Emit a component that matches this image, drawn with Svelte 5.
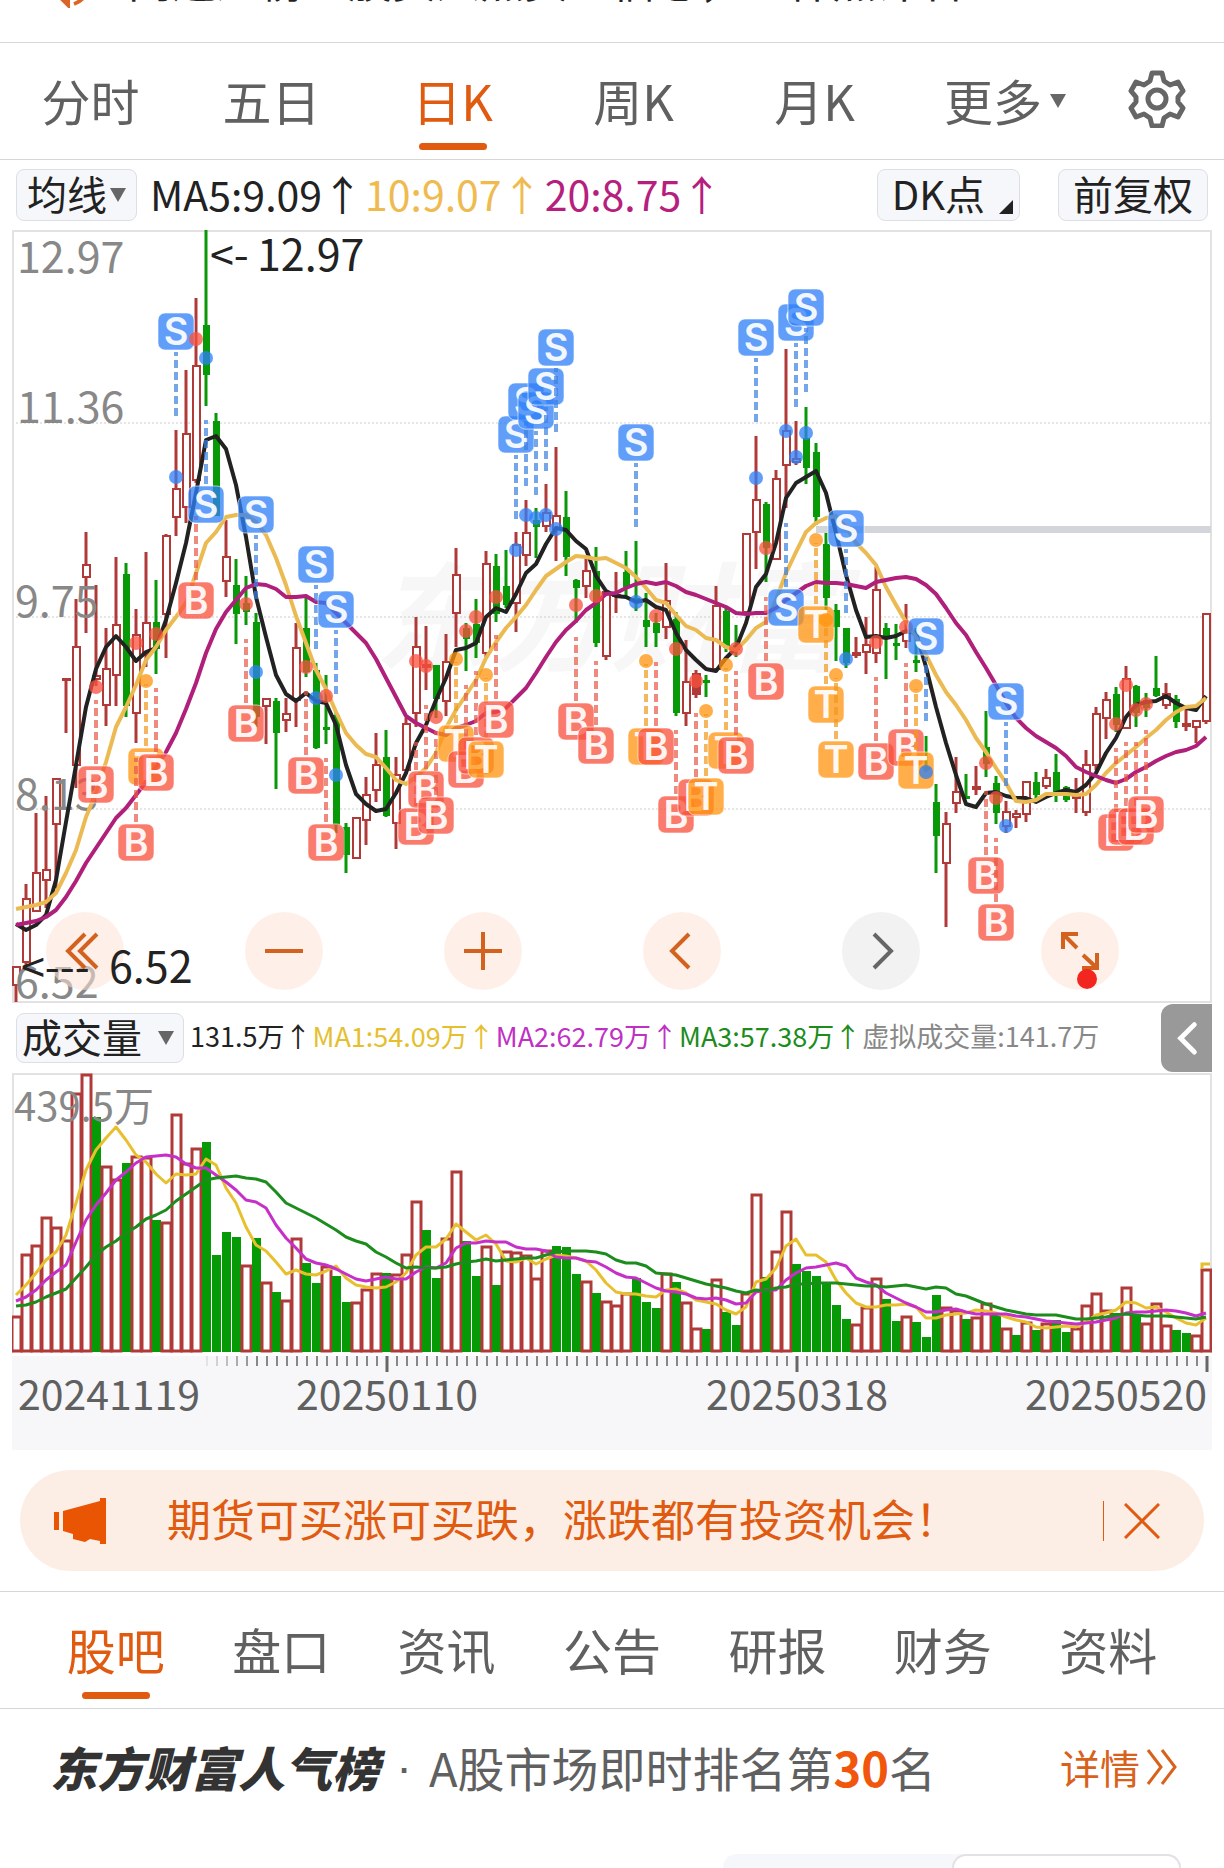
<script>
  // x position of the i-th trading day
  const X = (i) => 16 + 10 * i;

  // [colour, high, body top, body bottom, low] ; colour: r hollow, f filled red, g green
  const candles = `r 966 966 986 1002|r 884 898 963 966|r 813 872 912 912|r 796 869 881 908|r 778 778 825 888|f 678 678 679 733|r 599 646 766 788|r 532 564 578 633|r 585 675 680 686|r 628 668 706 726
r 557 624 676 706|g 563 574 706 717|r 609 634 714 743|r 552 622 655 667|g 580 622 649 674|r 534 535 615 658|r 430 488 518 536|r 370 433 508 523|r 298 365 481 483|g 230 325 375 406
g 413 421 516 516|r 520 556 582 597|g 559 585 614 644|g 576 603 612 625|g 613 622 717 727|r 698 698 707 744|g 698 701 733 789|r 698 713 721 732|r 623 647 701 727|g 595 628 672 677
g 663 670 748 749|g 675 727 729 744|g 712 715 825 833|g 823 827 855 873|r 817 817 859 859|r 777 794 821 845|r 733 764 791 802|g 730 757 816 817|r 757 774 824 849|r 718 723 771 771
r 617 646 714 727|f 626 664 668 690|g 665 665 699 718|r 634 661 702 716|r 548 574 614 647|g 623 628 639 671|g 599 624 643 658|r 551 563 654 657|g 554 566 614 622|g 550 586 605 608
r 532 544 604 632|r 500 532 556 566|g 508 520 527 558|r 484 512 527 532|r 447 515 530 561|g 491 517 557 576|g 579 580 588 623|r 558 570 587 598|g 547 571 643 647|r 590 591 657 660
f 572 594 596 613|g 551 572 587 597|g 541 598 602 611|g 593 620 627 647|g 613 623 633 647|r 563 600 628 639|g 612 619 713 716|r 640 681 714 726|f 670 673 695 698|g 675 680 681 697
r 586 605 670 670|g 608 611 648 652|g 625 645 650 657|r 533 533 613 613|r 436 499 533 569|g 502 504 548 582|r 470 478 560 560|r 349 430 466 508|r 421 458 463 465|g 407 438 468 484
g 443 452 517 525|g 533 544 598 610|g 604 610 627 661|g 628 628 663 668|f 637 652 656 658|r 617 644 653 674|r 567 589 654 663|g 623 628 637 679|g 624 643 646 660|r 604 630 642 648
g 628 660 661 672|g 736 767 768 772|g 784 802 836 873|r 812 823 864 927|r 757 791 804 813|g 774 796 797 798|f 766 786 790 795|g 711 747 764 777|g 776 783 813 824|r 801 811 827 833
r 810 813 818 828|r 781 781 815 822|g 772 782 795 803|r 769 777 787 789|g 754 772 795 802|g 786 787 800 802|f 778 796 798 813|r 750 764 813 816|r 707 713 766 770|r 692 699 719 739
g 687 694 725 732|r 666 678 729 729|g 685 686 713 727|g 693 700 708 717|g 656 688 696 697|r 683 693 706 709|g 695 699 722 728|f 708 723 727 731|r 720 720 728 743|r 613 613 722 724`
    .split(/[|\n]/)
    .map((s) => {
      const [c, h, t, b, l] = s.trim().split(' ');
      return { c, h: +h, t: +t, b: Math.max(+b, +t + 2), l: +l };
    });

  const nums = (s) => s.trim().split(/\s+/).map(Number);
  const line = (s) => nums(s).map((y, i) => `${X(i)},${y}`).join(' ');

  const ma5 = line(`924 930 925 915 880 822 765 707 669 647 636 647 661 652 648 620 583 543 493 440 436 449 485 537 597 637 675 694 701 693
701 703 725 765 794 804 811 809 793 773 743 725 700 678 650 648 643 617 608 612 594 573 564 544 528 530 541 549 576 591 596 597 602 600 607 610 633 650 660 669
671 658 648 623 587 574 543 498 483 477 471 493 533 575 610 637 636 638 636 631 633 667 707 743 775 804 807 793 792 796 798 798 802 797 793 790 792 785 773 753 738 717 705 702 701 696 703 708 710 696`);
  const ma10 = line(`909 907 905 902 893 873 850 817 793 762 727 707 685 660 647 630 617 603 573 543 532 517 515 515 522 535 558 585 616 643
670 689 712 733 745 754 757 768 780 784 777 768 753 728 710 695 680 658 642 628 617 605 590 576 569 562 556 557 559 558 563 568 577 588 600 603 615 626 630 638
640 647 650 640 628 622 600 573 552 532 523 518 516 527 543 553 565 587 605 622 637 655 675 692 705 720 738 752 768 783 801 802 800 794 794 794 795 794 785 773 763 755 747 738 730 720 712 707 706 698`);
  const ma20 = line(`925 923 921 917 910 897 881 863 848 833 818 808 795 782 767 752 733 709 683 653 629 612 600 588 584 585 589 597 597 596
602 603 613 623 633 643 659 678 697 716 723 728 733 735 728 725 721 713 712 708 698 688 673 657 642 630 621 610 603 594 593 588 584 582 584 582 586 592 595 599
603 607 613 614 613 613 608 600 593 586 582 583 583 584 586 588 582 580 578 577 579 585 594 608 623 635 652 668 685 703 718 728 736 742 748 756 767 772 776 780 783 779 772 767 761 756 752 750 746 737`);

  // [kind, day, badge centre, dot centre]
  const signals = `S 16 331 477|T 13 766 681|B 8 784 687|B 14 772 634|B 12 842 643|B 18 600 339|S 19 504 358|B 23 723 604|S 24 514 672|B 29 775 667|S 30 564 698|B 31 842 696|S 32 609 775
B 40 826 661|B 41 789 666|B 42 815 717|T 44 743 659|B 45 769 631|B 46 755 617|T 47 759 675|B 48 719 597|S 50 434 550|S 51 401 515|S 52 410 518|S 53 386 515|S 54 347 529|B 56 721 605|B 58 745 596|S 62 442 602
T 63 746 661|B 64 746 616|B 66 814 649|B 68 797 681|T 69 796 711|T 71 750 665|B 72 755 649|S 74 337 478|B 75 681 548|S 77 607 431|S 78 322 457|S 79 307 433|T 80 624 540|T 81 704 620|T 82 759 675|S 83 528 659
B 86 761 642|B 89 747 627|T 90 770 686|S 91 636 772|B 97 875 763|B 98 922 798|S 99 701 826|B 110 832 724|B 111 826 685|B 112 826 710|B 113 814 704`
    .split(/[|\n]/)
    .map((s) => {
      const [k, i, y, dot] = s.trim().split(' ');
      // a stem hangs above its badge when the price point does
      const above = +dot < +y;
      return {
        k,
        x: X(+i),
        y: +y,
        dot: +dot,
        y1: above ? Math.max(+y - 84, +dot + 3) : +y + 21,
        y2: above ? +y - 20 : +y + 85,
      };
    });

  const volTop = nums(`1316 1254 1245 1217 1227 1240 1093 1074 1117 1166 1179 1163 1156 1157 1220 1222 1114 1163 1148 1142 1255 1232 1237 1265 1238 1282 1292 1300 1238 1263
1283 1266 1276 1302 1302 1289 1273 1273 1274 1254 1201 1230 1278 1238 1171 1241 1276 1246 1285 1251 1252 1255 1278 1250 1246 1247 1274 1281 1293 1301 1305 1293 1278 1302 1308 1273 1282 1302 1328 1329
1279 1312 1325 1293 1194 1277 1251 1211 1264 1271 1276 1283 1305 1319 1324 1307 1278 1299 1321 1316 1322 1337 1295 1307 1310 1319 1317 1303 1315 1328 1335 1322 1330 1323 1320 1332 1328 1305 1293 1310
1313 1287 1315 1323 1303 1325 1330 1333 1335 1269`);
  const volColor =
    'rrrrrrrrgrrgrrgrrrrggggrgrgrrggrggrrrgrrrgg' +
    'rrggrgrrrrrgggrgrrrgggrgrrgrggrrgrrggggggrrrggrgggrrgrrgrgrgrggrrrrgrgrrrggrr';
  const bars = volTop.map((y, i) => ({ x: X(i), y, c: volColor[i] ?? 'r' }));

  const vma1 = line(`1295 1285 1273 1260 1252 1235 1203 1170 1150 1138 1127 1140 1155 1162 1174 1183 1174 1175 1174 1159 1165 1188 1203 1227 1245 1251 1262 1274 1270 1274
1275 1271 1266 1278 1285 1287 1288 1287 1282 1273 1255 1247 1247 1239 1224 1232 1240 1235 1244 1261 1262 1258 1264 1259 1255 1256 1258 1261 1270 1283 1292 1294 1294 1296 1297 1290 1289 1293 1300 1302
1304 1310 1314 1307 1282 1279 1268 1246 1239 1255 1255 1262 1280 1293 1303 1307 1307 1305 1305 1304 1307 1318 1318 1315 1314 1313 1310 1311 1313 1317 1320 1322 1327 1328 1327 1326 1327 1322 1315 1313
1310 1302 1303 1308 1307 1312 1318 1323 1325 1318`);
  const vma2 = line(`1301 1297 1290 1280 1272 1265 1242 1220 1205 1193 1180 1172 1163 1157 1156 1155 1157 1164 1168 1168 1175 1182 1190 1200 1202 1208 1225 1238 1248 1259
1263 1265 1269 1274 1279 1281 1279 1277 1279 1279 1272 1267 1268 1263 1248 1243 1243 1241 1242 1242 1247 1249 1249 1251 1257 1258 1258 1261 1262 1267 1273 1277 1278 1283 1288 1291 1292 1294 1298 1299
1298 1300 1304 1303 1292 1290 1290 1280 1273 1268 1267 1265 1263 1266 1278 1282 1285 1293 1298 1303 1307 1312 1312 1310 1309 1312 1314 1314 1314 1314 1316 1317 1319 1321 1322 1323 1324 1323 1322 1320
1318 1313 1312 1312 1311 1310 1311 1313 1316 1313`);
  const vma3 = line(`1306 1305 1302 1297 1293 1289 1278 1267 1255 1247 1241 1233 1227 1219 1215 1210 1201 1194 1187 1180 1178 1177 1176 1178 1179 1182 1192 1203 1208 1213
1218 1224 1230 1237 1241 1244 1252 1257 1263 1268 1267 1268 1268 1267 1264 1262 1261 1259 1261 1260 1259 1258 1258 1255 1252 1251 1251 1251 1252 1254 1260 1263 1263 1266 1273 1274 1275 1278 1281 1284
1286 1288 1291 1293 1290 1291 1288 1287 1284 1284 1283 1283 1283 1284 1285 1286 1286 1287 1286 1285 1287 1289 1287 1288 1294 1296 1300 1304 1307 1310 1312 1314 1315 1315 1315 1317 1319 1319 1318 1317
1315 1314 1315 1316 1316 1316 1317 1318 1319 1317`);

  const ticks = Array.from({ length: 101 }, (_, n) => n + 19);
  const major = [37, 78, 119];

  const periods = ['分时', '五日', '日K', '周K', '月K'];
  let period = $state('日K');
  const sections = ['股吧', '盘口', '资讯', '公告', '研报', '财务', '资料'];
  let section = $state('股吧');
</script>

<main>
  <div class="ticker">
    <div class="ticker-line">
      <svg class="horn" viewBox="0 0 40 40" aria-hidden="true">
        <path d="M3 14v12h6l11 11V3L9 14z M26 36q8 -3 11 -9" />
      </svg>
      <span>问道龙榜：股资人点资金信心，一样点评名</span>
    </div>
  </div>

  <nav class="periods">
    {#each periods as p}
      <button class:on={period === p} onclick={() => (period = p)}>{p}</button>
    {/each}
    <button>更多<i class="tri"></i></button>
    <button aria-label="设置">
      <svg class="gear" viewBox="0 0 58 58">
        <path d="M24 3h10l2 8 6 4 8-3 5 9-5 6v5l5 6-5 9-8-3-6 4-2 8H24l-2-8-6-4-8 3-5-9 5-6v-5l-5-6 5-9 8 3 6-4z" />
        <circle cx="29" cy="29" r="9" />
      </svg>
    </button>
  </nav>

  <section class="bar">
    <button class="chip">均线<i class="tri"></i></button>
    <p class="ma">
      <span>MA5:9.09↑</span>
      <span class="amber">10:9.07↑</span>
      <span class="plum">20:8.75↑</span>
    </p>
    <button class="chip dk">DK点<i class="corner"></i></button>
    <button class="chip">前复权</button>
  </section>

  <section class="chart">
    <svg viewBox="12 230 1200 773" role="img" aria-label="日K线图">
      <text class="mark" x="374" y="662">东方财富</text>
      <g class="grid">
        <path d="M12 423H1212M12 617H1212M12 809H1212" />
      </g>
      <path class="frame" d="M13 1003V231H1211V1002H12" />
      <rect class="gap" x="816" y="526" width="395" height="7" />

      {#each candles as k, i}
        <g class={k.c}>
          <path d="M{X(i)} {k.h}V{k.t}M{X(i)} {k.b}V{k.l}" />
          <rect
            x={X(i) - (k.c === 'g' ? 2 : 3)}
            y={k.t + 1}
            width={k.c === 'g' ? 5 : 7}
            height={Math.max(k.b - k.t - 2, 1)}
          />
        </g>
      {/each}

      <g class="axis">
        <text x="17" y="273">12.97</text>
        <text x="17" y="423">11.36</text>
        <text x="15" y="617">9.75</text>
        <text x="15" y="810">8.13</text>
        <text x="15" y="998">6.52</text>
      </g>

      <polyline class="l5" points={ma5} />
      <polyline class="l10" points={ma10} />
      <polyline class="l20" points={ma20} />

      {#each signals as s}
        <g class="sig {s.k}">
          <circle cx={s.x} cy={s.dot} r="7" />
          <path d="M{s.x} {s.y2}V{s.y1}" />
          <rect x={s.x - 18} y={s.y - 18} width="36" height="37" rx="7" />
          <text x={s.x} y={s.y + 14}>{s.k}</text>
        </g>
      {/each}
    </svg>

    <div class="tools">
      <button aria-label="最左"><svg viewBox="0 0 78 78"><path d="M39 22L22 39L39 56M51 22L34 39L51 56" /></svg></button>
      <button aria-label="缩小"><svg viewBox="0 0 78 78"><path d="M20 39H58" /></svg></button>
      <button aria-label="放大"><svg viewBox="0 0 78 78"><path d="M20 39H58M39 20V58" /></svg></button>
      <button aria-label="左移"><svg viewBox="0 0 78 78"><path d="M46 22L29 39L46 56" /></svg></button>
      <button class="off" aria-label="右移"><svg viewBox="0 0 78 78"><path d="M32 22L49 39L32 56" /></svg></button>
      <button aria-label="全屏">
        <svg viewBox="0 0 78 78">
          <path d="M36 36L22 22M22 37V22H37M42 43L56 56M56 41V56H41" />
          <circle cx="46" cy="67" r="10" />
        </svg>
      </button>
    </div>

    <svg class="notes" viewBox="12 230 1200 773" aria-hidden="true">
      <text x="210" y="271">&lt;-<tspan x="257">12.97</tspan></text>
      <text x="21" y="983">&lt;---<tspan x="109">6.52</tspan></text>
    </svg>
  </section>

  <section class="bar vol">
    <button class="chip wide">成交量<i class="tri"></i></button>
    <p class="vma">
      <span>131.5万↑</span>
      <span class="gold">MA1:54.09万↑</span>
      <span class="violet">MA2:62.79万↑</span>
      <span class="green">MA3:57.38万↑</span>
      <span class="grey">虚拟成交量:141.7万</span>
    </p>
    <button class="fold" aria-label="展开"><svg viewBox="0 0 52 68"><path d="M34 20L20 34L34 48" /></svg></button>
  </section>

  <section class="chart">
    <svg viewBox="12 1073 1200 377" role="img" aria-label="成交量图">
      <rect class="foot" x="12" y="1356" width="1200" height="94" />
      <path class="frame" d="M13 1353V1074H1211V1353" />
      {#each bars as b}
        {#if b.c === 'g'}
          <rect class="vg" x={b.x - 4} y={b.y} width="9" height={1352 - b.y} />
        {:else}
          <rect class="vr" x={b.x - 4} y={b.y + 1} width="9" height={1350 - b.y} />
        {/if}
      {/each}
      <path class="ghost" d="M1202 1269V1264H1210" />
      <text class="peak" x="14" y="1121">439.5万</text>
      <polyline class="v1" points={vma1} />
      <polyline class="v2" points={vma2} />
      <polyline class="v3" points={vma3} />
      {#each ticks as t}
        <path
          class="tick"
          class:major={major.includes(t)}
          opacity={Math.min(1, (t - 18) / 6)}
          d="M{X(t) + 1} 1356V{major.includes(t) ? 1372 : 1366}"
        />
      {/each}
      <g class="dates">
        <text x="18" y="1410">20241119</text>
        <text x="387" y="1410" text-anchor="middle">20250110</text>
        <text x="797" y="1410" text-anchor="middle">20250318</text>
        <text x="1207" y="1410" text-anchor="end">20250520</text>
      </g>
    </svg>
  </section>

  <aside class="notice">
    <svg class="mega" viewBox="0 0 52 46" aria-hidden="true">
      <path d="M0 14h5v18H0zM9 13L46 3V0h6v46h-6v-3l-10-2l-5 3l-12-3v-5l-10-3z" />
    </svg>
    <span>期货可买涨可买跌，涨跌都有投资机会！</span>
    <button aria-label="关闭"><svg viewBox="0 0 36 36"><path d="M1 1L35 35M35 1L1 35" /></svg></button>
  </aside>

  <nav class="sections">
    {#each sections as s}
      <button class:on={section === s} onclick={() => (section = s)}>{s}</button>
    {/each}
  </nav>

  <section class="rank">
    <strong>东方财富人气榜</strong>
    <span class="dot">·</span>
    <span>A股市场即时排名第<em>30</em>名</span>
    <a href="#detail">详情<svg viewBox="0 0 32 36"><path d="M2 1L15 18L2 35M16 1L29 18L16 35" /></svg></a>
  </section>

  <div class="segment"><span></span><span class="active"></span></div>
</main>

<style>
  :global(body) {
    background: #fff;
  }
  main {
    font-family: 'Noto Sans CJK SC', 'Noto Sans', sans-serif;
    color: #222;
    overflow: hidden;
  }
  button {
    font: inherit;
    color: inherit;
    background: none;
    border: 0;
    padding: 0;
    margin: 0;
    line-height: 1;
  }
  svg {
    display: block;
  }
  p {
    margin: 0;
  }

  .ticker {
    height: 8px;
    padding-bottom: 34px;
    border-bottom: 1px solid #d6d6d6;
    display: flex;
    align-items: flex-end;
  }
  .ticker-line {
    height: 8px;
    overflow: hidden;
    display: flex;
    align-items: flex-end;
    gap: 40px;
    padding-left: 48px;
    font-size: 44px;
    line-height: 58px;
    white-space: nowrap;
  }
  .horn {
    width: 40px;
    height: 40px;
    fill: none;
    stroke: #dc6426;
    stroke-width: 4;
  }

  .periods {
    display: grid;
    grid-template-columns: repeat(5, 181fr) 200fr 103fr;
    height: 116px;
    padding-right: 16px;
    border-bottom: 1px solid #d6d6d6;
    font-size: 49px;
    color: #606060;
  }
  .periods button,
  .sections button {
    display: flex;
    align-items: center;
    justify-content: center;
    position: relative;
    padding-bottom: 4px;
    white-space: nowrap;
  }
  .periods .on,
  .sections .on {
    color: #e05a10;
  }
  .on::after {
    content: '';
    position: absolute;
    bottom: 9px;
    width: 68px;
    height: 7px;
    border-radius: 4px;
    background: #e05a10;
  }
  .tri {
    border: 8px solid transparent;
    border-top: 14px solid #666;
    border-bottom: 0;
    margin: 4px 0 0 8px;
  }
  .gear {
    width: 58px;
    height: 58px;
    fill: none;
    stroke: #666;
    stroke-width: 5;
    stroke-linejoin: round;
  }

  .bar {
    display: flex;
    align-items: center;
    height: 70px;
    padding: 0 16px;
    font-size: 40px;
  }
  .chip {
    box-sizing: border-box;
    height: 52px;
    padding: 0 14px 4px;
    border: 1px solid #dcdfe5;
    border-radius: 8px;
    background: #f6f7fa;
    display: flex;
    align-items: center;
    position: relative;
    white-space: nowrap;
  }
  .chip .tri {
    margin-left: 3px;
  }
  .chip:first-child {
    padding-left: 10px;
    padding-right: 10px;
  }
  .chip.dk {
    padding-right: 34px;
    margin-right: 38px;
  }
  .corner {
    position: absolute;
    right: 6px;
    bottom: 6px;
    border-left: 14px solid transparent;
    border-bottom: 14px solid #222;
  }
  .ma {
    flex: 1;
    display: flex;
    gap: 2px;
    padding: 0 0 5px 13px;
    font-size: 41px;
    line-height: 48px;
    white-space: nowrap;
  }
  .amber {
    color: #efbb50;
  }
  .plum {
    color: #b61f7d;
  }

  .chart {
    position: relative;
    margin: 0 12px;
  }
  .chart > svg {
    width: 100%;
    height: auto;
  }
  .frame {
    fill: none;
    stroke: #e2e2e2;
    stroke-width: 2;
  }
  .grid path {
    stroke: #ccc;
    stroke-width: 1;
    stroke-dasharray: 2 2;
  }
  .mark {
    font-size: 118px;
    font-weight: 700;
    font-style: italic;
    fill: #f7f7f7;
  }
  .gap {
    fill: #d2d6da;
  }
  .r path,
  .f path,
  .g path {
    stroke-width: 3;
  }
  .r,
  .f {
    stroke: #b03a38;
    stroke-width: 2;
    fill: #fff;
  }
  .f rect {
    fill: #b03a38;
  }
  .g {
    stroke: #089808;
    stroke-width: 2;
    fill: #069a06;
  }
  .axis text {
    font-size: 43px;
    fill: #888;
  }
  .notes {
    position: absolute;
    inset: 0;
    pointer-events: none;
  }
  .notes text {
    font-size: 43px;
    fill: #222;
  }
  polyline {
    fill: none;
    stroke-width: 4;
    stroke-linejoin: round;
  }
  .l5 {
    stroke: #222;
  }
  .l10 {
    stroke: #ebba52;
  }
  .l20 {
    stroke: #b0207a;
  }
  .sig text {
    font: 600 38px Inter, 'Liberation Sans', sans-serif;
    text-anchor: middle;
    fill: #fff;
    opacity: 0.92;
  }
  .sig path {
    fill: none;
    stroke-width: 4;
    stroke-dasharray: 8 4;
    opacity: 0.7;
  }
  .sig rect {
    stroke: #fff;
    stroke-opacity: 0.6;
    stroke-width: 1;
    fill-opacity: 0.76;
  }
  .sig circle {
    fill-opacity: 0.76;
  }
  .S {
    fill: #2f80f8;
    stroke: #3a80e0;
  }
  .B {
    fill: #f8503c;
    stroke: #e85848;
  }
  .T {
    fill: #ff9510;
    stroke: #f0981c;
  }
  .sig text,
  .sig circle {
    stroke: none;
  }

  .tools {
    position: absolute;
    left: 34px;
    right: 93px;
    bottom: 13px;
    display: flex;
    justify-content: space-between;
  }
  .tools button {
    width: 78px;
    height: 78px;
    border-radius: 50%;
    background: rgba(253, 227, 213, 0.55);
  }
  .tools path {
    fill: none;
    stroke: #d4621f;
    stroke-width: 4;
  }
  .tools circle {
    fill: #f2261e;
  }
  .tools .off {
    background: #f2f2f2;
  }
  .tools .off path {
    stroke: #666;
  }

  .vol {
    padding-right: 12px;
  }
  .chip.wide {
    padding: 0 9px 4px 5px;
    height: 50px;
  }
  .wide .tri {
    margin-left: 16px;
  }
  .vma {
    flex: 1;
    display: flex;
    gap: 1px;
    padding: 0 0 4px 6px;
    font-size: 27px;
    line-height: 40px;
    white-space: nowrap;
  }
  .gold {
    color: #e6bf2e;
  }
  .violet {
    color: #c030c4;
  }
  .green {
    color: #1c8c1c;
  }
  .grey {
    color: #888;
  }
  .fold {
    width: 51px;
    height: 68px;
    border-radius: 12px 0 0 12px;
    background: #999;
  }
  .fold path {
    fill: none;
    stroke: #fff;
    stroke-width: 5;
    stroke-linecap: round;
  }

  .foot {
    fill: #f7f7fa;
  }
  .vg {
    fill: #069a06;
  }
  .vr {
    fill: #fff;
    stroke: #b03a38;
    stroke-width: 3;
  }
  .ghost {
    fill: none;
    stroke: #e6bf2e;
    stroke-width: 3;
  }
  .peak {
    font-size: 40px;
    fill: #888;
  }
  .v1 {
    stroke: #e8c02e;
  }
  .v2 {
    stroke: #c62fc8;
  }
  .v3 {
    stroke: #1c8c1c;
  }
  .v1,
  .v2,
  .v3 {
    stroke-width: 3;
  }
  .tick {
    stroke: #888;
    stroke-width: 2;
  }
  .major {
    stroke: #666;
    stroke-width: 3;
  }
  .dates text {
    font-size: 41px;
    fill: #606060;
  }

  .notice {
    margin: 20px;
    height: 101px;
    border-radius: 51px;
    background: #fdeee5;
    color: #e05a10;
    display: flex;
    align-items: center;
    padding: 0 44px 0 34px;
    font-size: 44px;
    white-space: nowrap;
  }
  .notice span {
    flex: 1;
    padding: 0 0 5px 61px;
  }
  .mega {
    width: 52px;
    height: 46px;
    fill: #ea5504;
  }
  .notice button {
    border-left: 1px solid #e05a10;
    padding: 2px 0 2px 20px;
  }
  .notice button svg {
    width: 36px;
    height: 36px;
    stroke: #e05a10;
    stroke-width: 3;
  }

  .sections {
    display: grid;
    grid-template-columns: repeat(7, 1fr);
    height: 116px;
    padding: 0 33px;
    border: solid #d6d6d6;
    border-width: 1px 0;
    font-size: 49px;
    color: #606060;
  }

  .rank {
    box-sizing: border-box;
    display: flex;
    align-items: center;
    height: 126px;
    padding: 0 46px 10px 50px;
    margin-bottom: 19px;
    font-size: 47px;
    line-height: 56px;
    color: #606060;
    white-space: nowrap;
  }
  .rank strong {
    font-weight: 900;
    font-style: italic;
    color: #333;
  }
  .dot {
    width: 50px;
    text-align: center;
    font-family: 'Liberation Sans', sans-serif;
  }
  .rank em {
    font-style: normal;
    font-weight: 700;
    color: #f0560c;
  }
  .rank a {
    margin-left: auto;
    display: flex;
    align-items: center;
    gap: 6px;
    font-size: 40px;
    color: #d8621c;
    text-decoration: none;
  }
  .rank a svg {
    width: 32px;
    height: 36px;
    fill: none;
    stroke: #d8621c;
    stroke-width: 3;
  }

  .segment {
    display: grid;
    grid-template-columns: 1fr 1fr;
    height: 14px;
    width: 458px;
    margin: 0 43px 0 auto;
    border-radius: 16px 16px 0 0;
    background: #f6f7fa;
  }
  .active {
    border: 2px solid #e2e2e6;
    border-bottom: 0;
    border-radius: 16px 16px 0 0;
    background: #fff;
  }
</style>
